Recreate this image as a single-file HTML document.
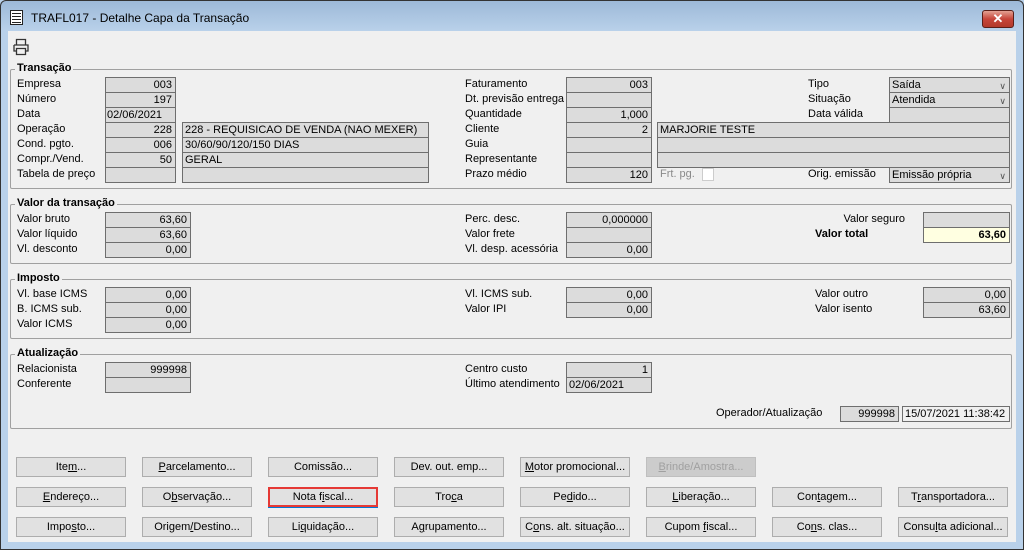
<!DOCTYPE html>
<html><head><meta charset="utf-8"><style>
*{margin:0;padding:0;box-sizing:border-box}
body{width:1024px;height:550px;overflow:hidden;background:#b9d1ea;font-family:"Liberation Sans",Arial,sans-serif;font-size:11px;color:#000;position:relative}
.tb{position:absolute;left:0;top:0;width:1024px;height:31px;background:linear-gradient(#9db9d8,#b9d1ea);border:1px solid #333;border-bottom:none;border-radius:6px 6px 0 0}
.cl{position:absolute;left:0;top:31px;width:1024px;height:519px;background:#b9d1ea;border-left:1px solid #333;border-right:1px solid #333;border-bottom:1px solid #333}
.ct{position:absolute;left:8px;top:31px;width:1008px;height:511px;background:#f0f0f0}
.a{position:absolute;white-space:nowrap}
.l{position:absolute;white-space:nowrap;line-height:15px;height:15px}
.f{position:absolute;height:16px;background:#dcdcdc;border:1px solid #6e6e6e;line-height:15px;padding:0 3px;white-space:nowrap;overflow:hidden}
.r{text-align:right}
.g{position:absolute;border:1px solid #a0a0a0;border-radius:2px}
.gt{position:absolute;background:#f0f0f0;font-weight:bold;padding:0 2px;line-height:13px;font-size:11px}
.b{position:absolute;width:110px;height:20px;background:#e1e1e1;border:1px solid #adadad;text-align:center;line-height:18px;white-space:nowrap}
.cb{position:absolute;right:3px;top:1px;font-size:9px;color:#555}
u{text-decoration:underline}
</style></head><body>
<div class="tb"></div><div class="cl"></div>
<div class="a" style="left:10px;top:10px;width:13px;height:15px;background:#fff;border:1px solid #222"></div>
<div class="a" style="left:12px;top:13px;width:9px;height:1px;background:#222;box-shadow:0 3px #222,0 6px #222,0 9px #222"></div>
<div class="a" style="left:31px;top:11px;font-size:12px">TRAFL017 - Detalhe Capa da Transação</div>
<div class="a" style="left:982px;top:10px;width:32px;height:18px;background:linear-gradient(#e3a193,#c7453a 50%,#b23a2c);border:1px solid #5b1e18;border-radius:3px;color:#fff;font-weight:bold;text-align:center;line-height:16px;font-size:13px">✕</div>
<div class="ct"></div>
<svg class="a" style="left:12px;top:38px" width="18" height="18" viewBox="0 0 18 18"><path d="M4.5 7V1.5h9V7M2 7h14v6h-2.5M4.5 13H2V7M4.5 10.5h9v6h-9z" fill="none" stroke="#333" stroke-width="1.3"/></svg>

<div class="g" style="left:10px;top:69px;width:1002px;height:120px"></div>
<div class="gt" style="left:15px;top:62px">Transação</div>
<div class="l" style="left:17px;top:77px">Empresa</div>
<div class="l" style="left:17px;top:92px">Número</div>
<div class="l" style="left:17px;top:107px">Data</div>
<div class="l" style="left:17px;top:122px">Operação</div>
<div class="l" style="left:17px;top:137px">Cond. pgto.</div>
<div class="l" style="left:17px;top:152px">Compr./Vend.</div>
<div class="l" style="left:17px;top:167px">Tabela de preço</div>
<div class="f r" style="left:105px;top:77px;width:71px">003</div>
<div class="f r" style="left:105px;top:92px;width:71px">197</div>
<div class="f" style="left:105px;top:107px;width:71px;padding:0 1px">02/06/2021</div>
<div class="f r" style="left:105px;top:122px;width:71px">228</div>
<div class="f r" style="left:105px;top:137px;width:71px">006</div>
<div class="f r" style="left:105px;top:152px;width:71px">50</div>
<div class="f r" style="left:105px;top:167px;width:71px"></div>
<div class="f" style="left:182px;top:122px;width:247px;padding:0 2px">228 - REQUISICAO DE VENDA (NAO MEXER)</div>
<div class="f" style="left:182px;top:137px;width:247px;padding:0 2px">30/60/90/120/150 DIAS</div>
<div class="f" style="left:182px;top:152px;width:247px;padding:0 2px">GERAL</div>
<div class="f" style="left:182px;top:167px;width:247px"></div>

<div class="l" style="left:465px;top:77px">Faturamento</div>
<div class="l" style="left:465px;top:92px">Dt. previsão entrega</div>
<div class="l" style="left:465px;top:107px">Quantidade</div>
<div class="l" style="left:465px;top:122px">Cliente</div>
<div class="l" style="left:465px;top:137px">Guia</div>
<div class="l" style="left:465px;top:152px">Representante</div>
<div class="l" style="left:465px;top:167px">Prazo médio</div>
<div class="f r" style="left:566px;top:77px;width:86px">003</div>
<div class="f r" style="left:566px;top:92px;width:86px"></div>
<div class="f r" style="left:566px;top:107px;width:86px">1,000</div>
<div class="f r" style="left:566px;top:122px;width:86px">2</div>
<div class="f r" style="left:566px;top:137px;width:86px"></div>
<div class="f r" style="left:566px;top:152px;width:86px"></div>
<div class="f r" style="left:566px;top:167px;width:86px">120</div>
<div class="f" style="left:657px;top:122px;width:353px;padding:0 2px">MARJORIE TESTE</div>
<div class="f" style="left:657px;top:137px;width:353px"></div>
<div class="f" style="left:657px;top:152px;width:353px"></div>
<div class="l" style="left:660px;top:167px;color:#8a8a8a">Frt. pg.</div>
<div class="a" style="left:702px;top:168px;width:12px;height:13px;background:#fff;border:1px solid #ccc"></div>

<div class="l" style="left:808px;top:77px">Tipo</div>
<div class="l" style="left:808px;top:92px">Situação</div>
<div class="l" style="left:808px;top:107px">Data válida</div>
<div class="l" style="left:808px;top:167px">Orig. emissão</div>
<div class="f" style="left:889px;top:77px;width:121px;padding:0 2px">Saída<span class="cb">∨</span></div>
<div class="f" style="left:889px;top:92px;width:121px;padding:0 2px">Atendida<span class="cb">∨</span></div>
<div class="f" style="left:889px;top:107px;width:121px"></div>
<div class="f" style="left:889px;top:167px;width:121px;padding:0 2px">Emissão própria<span class="cb">∨</span></div>

<div class="g" style="left:10px;top:204px;width:1002px;height:60px"></div>
<div class="gt" style="left:15px;top:197px">Valor da transação</div>
<div class="l" style="left:17px;top:212px">Valor bruto</div>
<div class="l" style="left:17px;top:227px">Valor líquido</div>
<div class="l" style="left:17px;top:242px">Vl. desconto</div>
<div class="f r" style="left:105px;top:212px;width:86px">63,60</div>
<div class="f r" style="left:105px;top:227px;width:86px">63,60</div>
<div class="f r" style="left:105px;top:242px;width:86px">0,00</div>
<div class="l" style="left:465px;top:212px">Perc. desc.</div>
<div class="l" style="left:465px;top:227px">Valor frete</div>
<div class="l" style="left:465px;top:242px">Vl. desp. acessória</div>
<div class="f r" style="left:566px;top:212px;width:86px">0,000000</div>
<div class="f r" style="left:566px;top:227px;width:86px"></div>
<div class="f r" style="left:566px;top:242px;width:86px">0,00</div>
<div class="l r" style="left:800px;width:105px;top:212px">Valor seguro</div>
<div class="l" style="left:815px;top:227px;font-weight:bold">Valor total</div>
<div class="f r" style="left:923px;top:212px;width:87px"></div>
<div class="f r" style="left:923px;top:227px;width:87px;background:#ffffe1;font-weight:bold">63,60</div>

<div class="g" style="left:10px;top:279px;width:1002px;height:60px"></div>
<div class="gt" style="left:15px;top:272px">Imposto</div>
<div class="l" style="left:17px;top:287px">Vl. base ICMS</div>
<div class="l" style="left:17px;top:302px">B. ICMS sub.</div>
<div class="l" style="left:17px;top:317px">Valor ICMS</div>
<div class="f r" style="left:105px;top:287px;width:86px">0,00</div>
<div class="f r" style="left:105px;top:302px;width:86px">0,00</div>
<div class="f r" style="left:105px;top:317px;width:86px">0,00</div>
<div class="l" style="left:465px;top:287px">Vl. ICMS sub.</div>
<div class="l" style="left:465px;top:302px">Valor IPI</div>
<div class="f r" style="left:566px;top:287px;width:86px">0,00</div>
<div class="f r" style="left:566px;top:302px;width:86px">0,00</div>
<div class="l" style="left:815px;top:287px">Valor outro</div>
<div class="l" style="left:815px;top:302px">Valor isento</div>
<div class="f r" style="left:923px;top:287px;width:87px">0,00</div>
<div class="f r" style="left:923px;top:302px;width:87px">63,60</div>

<div class="g" style="left:10px;top:354px;width:1002px;height:75px"></div>
<div class="gt" style="left:15px;top:347px">Atualização</div>
<div class="l" style="left:17px;top:362px">Relacionista</div>
<div class="l" style="left:17px;top:377px">Conferente</div>
<div class="f r" style="left:105px;top:362px;width:86px">999998</div>
<div class="f r" style="left:105px;top:377px;width:86px"></div>
<div class="l" style="left:465px;top:362px">Centro custo</div>
<div class="l" style="left:465px;top:377px">Último atendimento</div>
<div class="f r" style="left:566px;top:362px;width:86px">1</div>
<div class="f" style="left:566px;top:377px;width:86px;padding:0 2px">02/06/2021</div>
<div class="l" style="left:716px;top:406px">Operador/Atualização</div>
<div class="f r" style="left:840px;top:406px;width:59px">999998</div>
<div class="f" style="left:902px;top:406px;width:108px;padding:0 2px;background:#f0f0f0">15/07/2021 11:38:42</div>

<div class="b" style="left:16px;top:457px">Ite<u>m</u>...</div>
<div class="b" style="left:142px;top:457px"><u>P</u>arcelamento...</div>
<div class="b" style="left:268px;top:457px">Comissão...</div>
<div class="b" style="left:394px;top:457px">Dev. out. emp...</div>
<div class="b" style="left:520px;top:457px"><u>M</u>otor promocional...</div>
<div class="b" style="left:646px;top:457px;color:#a0a0a0;background:#ccc;border-color:#bfbfbf"><u>B</u>rinde/Amostra...</div>

<div class="b" style="left:16px;top:487px"><u>E</u>ndereço...</div>
<div class="b" style="left:142px;top:487px">O<u>b</u>servação...</div>
<div class="b" style="left:268px;top:487px;border:2px solid #e53935;box-shadow:0 1px 0 #0078d7;line-height:16px">Nota f<u>i</u>scal...</div>
<div class="b" style="left:394px;top:487px">Tro<u>c</u>a</div>
<div class="b" style="left:520px;top:487px">Pe<u>d</u>ido...</div>
<div class="b" style="left:646px;top:487px"><u>L</u>iberação...</div>
<div class="b" style="left:772px;top:487px">Con<u>t</u>agem...</div>
<div class="b" style="left:898px;top:487px">T<u>r</u>ansportadora...</div>

<div class="b" style="left:16px;top:517px">Impo<u>s</u>to...</div>
<div class="b" style="left:142px;top:517px">Origem<u>/</u>Destino...</div>
<div class="b" style="left:268px;top:517px">Li<u>q</u>uidação...</div>
<div class="b" style="left:394px;top:517px">A<u>g</u>rupamento...</div>
<div class="b" style="left:520px;top:517px">C<u>o</u>ns. alt. situação...</div>
<div class="b" style="left:646px;top:517px">Cupom <u>f</u>iscal...</div>
<div class="b" style="left:772px;top:517px">Co<u>n</u>s. clas...</div>
<div class="b" style="left:898px;top:517px">Consu<u>l</u>ta adicional...</div>
</body></html>
